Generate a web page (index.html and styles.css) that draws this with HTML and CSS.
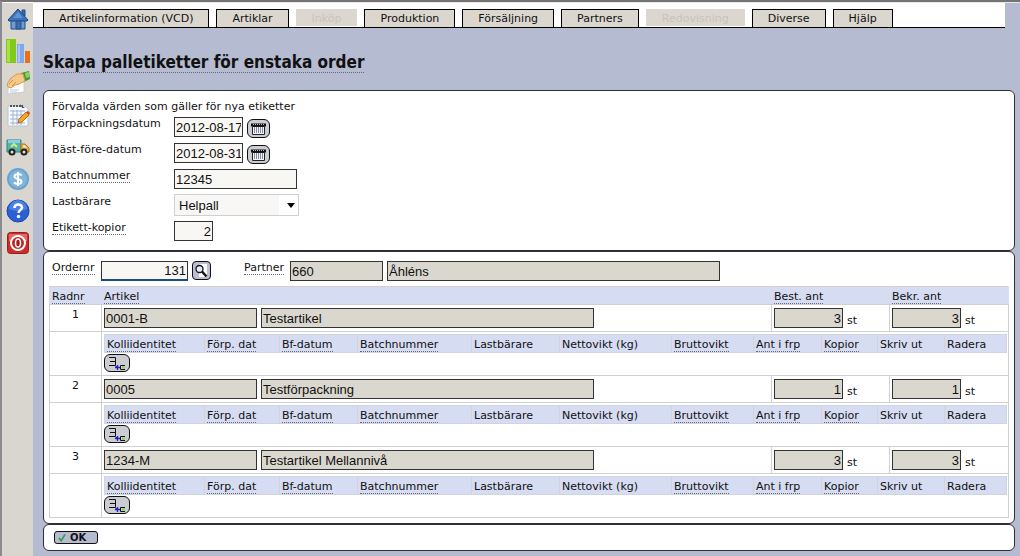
FILE: index.html
```html
<!DOCTYPE html>
<html lang="sv">
<head>
<meta charset="utf-8">
<title>Skapa palletiketter för enstaka order</title>
<link rel="stylesheet" href="styles.css">
</head>
<body>
<svg class="defs" aria-hidden="true">
  <symbol id="cal" viewBox="0 0 17 13">
    <path d="M2.500 4.500h12v8h-12z" fill="#f4f5f8" stroke="#222"/>
    <path d="M1 1.500h15v3H1z" fill="#111"/>
    <path d="M3 2.500h11" stroke="#bbb" stroke-dasharray="1 1"/>
    <path d="M4.500 5v6M6.500 5v6M8.500 5v6M10.500 5v6M12.500 5v6" stroke="#8489a0"/>
  </symbol>
  <symbol id="add" viewBox="0 0 24 16">
    <path d="M4 2.500h6.500v8H4M5 6.500h5" fill="none" stroke="#111"/>
    <path d="M10 12.500h5M12.500 10v5M10.500 12.500l2-2" fill="none" stroke="#22b" stroke-width="1.300"/>
    <path d="M20 10.500h-4.500v4H20" fill="none" stroke="#111"/>
    <path d="M17 11.500h3v2h-3z" fill="#7d5"/>
  </symbol>
</svg>
<div class="app">
  <nav class="tools" aria-label="Genvägar">
    <a href="#" aria-label="Hem"><svg viewBox="0 0 24 24"><path d="M5 13v9h14v-9l-7-8z" fill="#6f9cd2" stroke="#234d86"/><path d="M16 3h3v6h-3z" fill="#3b6cab" stroke="#234d86"/><path d="M2 13L12 2l10 11-1 1H3z" fill="#3b74bb" stroke="#1d457d"/><path d="M7 11l5-6 5 6z" fill="#5d94d4"/><path d="M10 14h5v8h-5z" fill="#3d6cab" stroke="#27528d"/></svg></a>
    <a href="#" aria-label="Statistik"><svg viewBox="0 0 24 24"><path d="M0 0h10v24H0z" fill="#83c91c"/><path d="M1 1h3v22H1z" fill="#a9e044"/><path d="M11 5h7v19h-7z" fill="#7fa8ee"/><path d="M12 6h2v17h-2z" fill="#a7c5f8"/><path d="M19 12h5v12h-5z" fill="#e5731b"/></svg></a>
    <a href="#" aria-label="Inköp"><svg viewBox="0 0 24 24"><path d="M2 10l16-1v12L2 23z" fill="#fff" stroke="#c9ccd0"/><path d="M4 19h9M4 21h7" stroke="#bcd"/><path d="M15 2l8-2 1 8-6 3z" fill="#3f9b34"/><path d="M19 2l4-1v5l-3 1z" fill="#8fd167"/><path d="M17 3l2 7-6 3-4 1-4 3-3-1-1-3 4-6 6-4z" fill="#f4c988" stroke="#d59a50"/><path d="M3 13l4-4M6 15l4-4" stroke="#cf9650"/></svg></a>
    <a href="#" aria-label="Order"><svg viewBox="0 0 24 24"><path d="M2 3h17l3 3v17H2z" fill="#f7faff" stroke="#b8c5d8"/><path d="M4 8h15M4 12h15M4 16h15M4 20h15M7 7v15M11 7v15M15 7v15" stroke="#9cb4d6"/><path d="M4 3h13" stroke="#556" stroke-width="2" stroke-dasharray="2 1"/><path d="M14 1l5 4h-3z" fill="#456"/><path d="M12 20l1-4 7-7 3 3-7 7z" fill="#f5a623" stroke="#b96b13"/><path d="M20 9l3 3 1-2-2-2z" fill="#d34430"/></svg></a>
    <a href="#" aria-label="Leverans"><svg viewBox="0 0 24 24"><path d="M1 5h14v12H1z" fill="#5bb4a6" stroke="#2e837a"/><path d="M2 5h12v3H2z" fill="#86d0ec"/><path d="M5 12l3-3 3 3" fill="none" stroke="#bff08c" stroke-width="2"/><path d="M15 9h4l4 4v4h-8z" fill="#f3a720" stroke="#c0760e"/><path d="M17 10h2l2 3h-4z" fill="#c3e4f7"/><circle cx="6" cy="17" r="2.500" fill="#ddd" stroke="#222" stroke-width="2"/><circle cx="18" cy="17" r="2.500" fill="#ddd" stroke="#222" stroke-width="2"/></svg></a>
    <a href="#" aria-label="Ekonomi"><svg viewBox="0 0 24 24"><circle cx="12" cy="12" r="11" fill="#6ba3cf"/><circle cx="12" cy="12" r="9" fill="#80b5dc"/><path d="M15.500 8.500C14 6.500 8.500 6.500 8.500 9.500c0 3 7 2 7 5 0 3-5.500 3-7.500 1M12 5v14" fill="none" stroke="#fff" stroke-width="2"/></svg></a>
    <a href="#" aria-label="Hjälp"><svg viewBox="0 0 24 24"><circle cx="12" cy="12" r="11" fill="#2b5fd4" stroke="#1c46a8"/><path d="M3 10a9 9 0 0 1 18 0q-9 4-18 0" fill="#4d80e6"/><path d="M8.500 9c0-5 7.500-4.500 7.500-.5 0 2.500-3.500 2.500-3.500 5.500" fill="none" stroke="#fff" stroke-width="2.500"/><circle cx="12.500" cy="17.500" r="1.700" fill="#fff"/></svg></a>
    <a href="#" aria-label="Logga ut"><svg viewBox="0 0 24 24"><rect x="1.500" y="1.500" width="21" height="21" rx="3" fill="#cf2a27" stroke="#96201d"/><path d="M3 3h18v7H3z" fill="#e46561"/><circle cx="12" cy="12" r="7" fill="#bd2522" stroke="#fff" stroke-width="2"/><ellipse cx="12" cy="12" rx="2.500" ry="4" fill="#a51c1a" stroke="#fff" stroke-width="1.500"/></svg></a>
  </nav>
  <div class="main">
    <nav class="tabs" aria-label="Huvudmeny">
      <button class="tab" type="button">Artikelinformation (VCD)</button>
      <button class="tab" type="button">Artiklar</button>
      <button class="tab" type="button" disabled>Inköp</button>
      <button class="tab" type="button">Produktion</button>
      <button class="tab" type="button">Försäljning</button>
      <button class="tab" type="button">Partners</button>
      <button class="tab" type="button" disabled>Redovisning</button>
      <button class="tab" type="button">Diverse</button>
      <button class="tab" type="button">Hjälp</button>
    </nav>
    <form class="content">
      <h1><span class="hint">Skapa palletiketter för enstaka order</span></h1>

      <section class="panel defaults">
        <p>Förvalda värden som gäller för nya etiketter</p>
        <div class="fields">
          <label for="packdate">Förpackningsdatum</label>
          <div class="control"><input class="field date" id="packdate" value="2012-08-17"><button class="icon-btn cal" type="button" aria-label="Välj förpackningsdatum"><svg><use href="#cal"/></svg></button></div>
          <label for="bestdate">Bäst-före-datum</label>
          <div class="control"><input class="field date" id="bestdate" value="2012-08-31"><button class="icon-btn cal" type="button" aria-label="Välj bäst-före-datum"><svg><use href="#cal"/></svg></button></div>
          <label for="batch"><span class="hint">Batchnummer</span></label>
          <div class="control"><input class="field batch" id="batch" value="12345"></div>
          <label for="carrier">Lastbärare</label>
          <div class="control"><span class="select"><select id="carrier"><option>Helpall</option></select></span></div>
          <label for="copies"><span class="hint">Etikett-kopior</span></label>
          <div class="control"><input class="field copies num" id="copies" value="2"></div>
        </div>
      </section>

      <section class="panel order">
        <div class="order-row">
          <label class="order-label" for="orderno"><span class="hint">Ordernr</span></label>
          <input class="field orderno num" id="orderno" value="131">
          <button class="icon-btn find" type="button" aria-label="Sök order"><svg viewBox="0 0 17 16"><path d="M6 1h8v13H6z" fill="#fff"/><circle cx="6.500" cy="6" r="3.500" fill="#e8eef8" stroke="#111" stroke-width="1.300"/><path d="M9 8.500l4.500 5" stroke="#111" stroke-width="2.500"/></svg></button>
          <label class="partner-label" for="partner"><span class="hint">Partner</span></label>
          <input class="field partner ro" id="partner" value="660" readonly>
          <input class="field wide ro" aria-label="Partnernamn" value="Åhléns" readonly>
        </div>
        <table class="rows">
          <colgroup><col class="c-no"><col><col class="c-best"><col class="c-bekr"></colgroup>
          <thead><tr><th><span class="hint">Radnr</span></th><th><span class="hint">Artikel</span></th><th><span class="hint">Best. ant</span></th><th><span class="hint">Bekr. ant</span></th></tr></thead>
          <tbody>
            <tr>
              <td class="no">1</td>
              <td><div class="cell"><input class="field art ro" aria-label="Artikel" value="0001-B" readonly><input class="field wide ro" aria-label="Benämning" value="Testartikel" readonly></div></td>
              <td><div class="cell"><input class="field qty num ro" aria-label="Beställt antal" value="3" readonly><span class="unit">st</span></div></td>
              <td><div class="cell"><input class="field qty num ro" aria-label="Bekräftat antal" value="3" readonly><span class="unit">st</span></div></td>
            </tr>
            <tr>
              <td></td>
              <td class="nest" colspan="3">
                <table class="labels">
                  <colgroup><col class="w100"><col class="w75"><col class="w78"><col class="w114"><col class="w88"><col class="w112"><col class="w82"><col class="w68"><col class="w56"><col class="w67"><col class="w62"></colgroup>
                  <tr><th><span class="hint">Kolliidentitet</span></th><th><span class="hint">Förp. dat</span></th><th><span class="hint">Bf-datum</span></th><th><span class="hint">Batchnummer</span></th><th>Lastbärare</th><th>Nettovikt (kg)</th><th><span class="hint">Bruttovikt</span></th><th><span class="hint">Ant i frp</span></th><th><span class="hint">Kopior</span></th><th>Skriv ut</th><th>Radera</th></tr>
                </table>
                <button class="icon-btn add" type="button" aria-label="Lägg till"><svg><use href="#add"/></svg></button>
              </td>
            </tr>
            <tr>
              <td class="no">2</td>
              <td><div class="cell"><input class="field art ro" aria-label="Artikel" value="0005" readonly><input class="field wide ro" aria-label="Benämning" value="Testförpackning" readonly></div></td>
              <td><div class="cell"><input class="field qty num ro" aria-label="Beställt antal" value="1" readonly><span class="unit">st</span></div></td>
              <td><div class="cell"><input class="field qty num ro" aria-label="Bekräftat antal" value="1" readonly><span class="unit">st</span></div></td>
            </tr>
            <tr>
              <td></td>
              <td class="nest" colspan="3">
                <table class="labels">
                  <colgroup><col class="w100"><col class="w75"><col class="w78"><col class="w114"><col class="w88"><col class="w112"><col class="w82"><col class="w68"><col class="w56"><col class="w67"><col class="w62"></colgroup>
                  <tr><th><span class="hint">Kolliidentitet</span></th><th><span class="hint">Förp. dat</span></th><th><span class="hint">Bf-datum</span></th><th><span class="hint">Batchnummer</span></th><th>Lastbärare</th><th>Nettovikt (kg)</th><th><span class="hint">Bruttovikt</span></th><th><span class="hint">Ant i frp</span></th><th><span class="hint">Kopior</span></th><th>Skriv ut</th><th>Radera</th></tr>
                </table>
                <button class="icon-btn add" type="button" aria-label="Lägg till"><svg><use href="#add"/></svg></button>
              </td>
            </tr>
            <tr>
              <td class="no">3</td>
              <td><div class="cell"><input class="field art ro" aria-label="Artikel" value="1234-M" readonly><input class="field wide ro" aria-label="Benämning" value="Testartikel Mellannivå" readonly></div></td>
              <td><div class="cell"><input class="field qty num ro" aria-label="Beställt antal" value="3" readonly><span class="unit">st</span></div></td>
              <td><div class="cell"><input class="field qty num ro" aria-label="Bekräftat antal" value="3" readonly><span class="unit">st</span></div></td>
            </tr>
            <tr>
              <td></td>
              <td class="nest" colspan="3">
                <table class="labels">
                  <colgroup><col class="w100"><col class="w75"><col class="w78"><col class="w114"><col class="w88"><col class="w112"><col class="w82"><col class="w68"><col class="w56"><col class="w67"><col class="w62"></colgroup>
                  <tr><th><span class="hint">Kolliidentitet</span></th><th><span class="hint">Förp. dat</span></th><th><span class="hint">Bf-datum</span></th><th><span class="hint">Batchnummer</span></th><th>Lastbärare</th><th>Nettovikt (kg)</th><th><span class="hint">Bruttovikt</span></th><th><span class="hint">Ant i frp</span></th><th><span class="hint">Kopior</span></th><th>Skriv ut</th><th>Radera</th></tr>
                </table>
                <button class="icon-btn add" type="button" aria-label="Lägg till"><svg><use href="#add"/></svg></button>
              </td>
            </tr>
          </tbody>
        </table>
      </section>

      <section class="panel actions">
        <button class="ok" type="button"><svg viewBox="0 0 9 9"><path d="M1 5l2.500 3L8 1" fill="none" stroke="#3a9a55" stroke-width="2"/></svg>OK</button>
      </section>
    </form>
  </div>
</div>
</body>
</html>
```
FILE: styles.css
```css
* { box-sizing: border-box; }
body {
  margin: 0;
  background: #b5bbd1;
  color: #111;
  font: 11px/13px Verdana, "DejaVu Sans", sans-serif;
}
button, input, select { font: inherit; color: inherit; margin: 0; }
h1, p { margin: 0; font-weight: normal; }
.defs { display: none; }
.app {
  display: flex;
  min-height: 100vh;
  border-top: 2px solid #757373;
  border-left: 2px solid #8b8b8f;
}
.tools {
  flex: none;
  display: grid;
  grid-auto-rows: 32px;
  align-content: start;
  justify-items: center;
  width: 31px;
  border-top: 1px solid #fff;
  background: #d9d6cf;
}
.tools a { display: flex; align-items: center; }
.tools svg { width: 24px; height: 24px; }
.main { flex: 1; min-width: 0; border-top: 1px solid #e8e8e8; }
.tabs {
  display: flex;
  gap: 7px;
  margin-right: 15px;
  padding: 6px 0 0 10px;
  border-bottom: 1px solid #000;
  background: #fff;
}
.tab {
  height: 18px;
  padding: 0 15px;
  border: 1px solid #000;
  border-bottom: 0;
  background: #dbd7cf;
  line-height: 17px;
  white-space: nowrap;
}
.tab:disabled { height: 17px; border-color: #dbd8d2; color: #c6c3be; }
.content { padding: 0 5px 5px 10px; }
h1 {
  padding: 24px 0 17px;
  font: bold 17px/21px Tahoma, "DejaVu Sans Condensed", sans-serif;
}
.hint { border-bottom: 1px dotted #667; }
.panel { border: 1px solid #2e2f3a; border-radius: 6px; background: #fff; }
.defaults { padding: 9px 8px; }
.defaults p { margin-bottom: 4px; }
.fields {
  display: grid;
  grid-template-columns: 122px 1fr;
  grid-auto-rows: 20px;
  row-gap: 6px;
}
.control { display: flex; align-items: center; gap: 4px; }
.field {
  height: 20px;
  min-width: 0;
  padding: 0 1px;
  border: 1px solid #333;
  border-radius: 0;
  background: #f8f7f4;
  font: 13px "Liberation Sans", Arial, sans-serif;
}
.ro { background: #dad7cf; }
.num { text-align: right; }
.date { width: 69px; }
.batch { width: 123px; }
.copies { width: 39px; }
.select { position: relative; width: 125px; }
.select::after {
  content: "";
  position: absolute;
  top: 9px;
  right: 4px;
  border: 4px solid transparent;
  border-top: 5px solid #000;
  border-bottom: 0;
  pointer-events: none;
}
.select select {
  display: block;
  appearance: none;
  width: 100%;
  height: 22px;
  padding: 0 20px 0 4px;
  border: 1px solid #d0d0d0;
  border-radius: 0;
  background: linear-gradient(90deg, #f8f7f6 104px, #fff 104px);
  font: 13px "Liberation Sans", Arial, sans-serif;
}
.icon-btn {
  flex: none;
  display: flex;
  align-items: center;
  justify-content: center;
  padding: 0;
  border: 1px solid #111;
  border-radius: 6px;
  background: #cccdd2;
}
.cal { width: 23px; height: 19px; margin-top: 2px; }
.cal svg { width: 17px; height: 13px; }
.find { width: 19px; height: 19px; border-radius: 4px; background: #b9bed3; }
.find svg { width: 17px; height: 16px; }
.add { width: 26px; height: 18px; margin-top: 1px; }
.add svg { width: 24px; height: 16px; }
.order { padding: 9px 5px 5px; }
.order-row { display: flex; align-items: flex-start; gap: 4px; padding-left: 3px; margin-bottom: 5px; }
.order-label { width: 45px; white-space: nowrap; }
.orderno { width: 87px; border-bottom: 2px solid #1c4c86; }
.partner-label { width: 42px; margin-left: 29px; white-space: nowrap; }
.partner { width: 93px; }
.wide { width: 333px; }
table { width: 100%; table-layout: fixed; border-collapse: collapse; }
th, td { padding: 0 2px; border: 1px solid #d0d0d0; text-align: left; vertical-align: top; font-weight: normal; }
th { height: 18px; padding-top: 3px; background: #d6dcf1; white-space: nowrap; }
.rows > thead th { border-left-color: #d6dcf1; border-right-color: #d6dcf1; }
.c-no { width: 52px; }
.c-best { width: 118px; }
.c-bekr { width: 119px; }
.no { padding-top: 3px; text-align: center; }
.cell { display: flex; gap: 4px; padding: 3px 0; }
.art { width: 153px; }
.qty { width: 69px; }
.unit { padding-top: 6px; }
.nest { padding: 2px 2px 3px; }
.labels th { border-color: #d0d3e0; }
.w100 { width: 100px; }
.w75 { width: 75px; }
.w78 { width: 78px; }
.w114 { width: 114px; }
.w88 { width: 88px; }
.w112 { width: 112px; }
.w82 { width: 82px; }
.w68 { width: 68px; }
.w56 { width: 56px; }
.w67 { width: 67px; }
.w62 { width: 62px; }
.actions { padding: 6px 10px; }
.ok {
  display: flex;
  align-items: center;
  gap: 4px;
  width: 44px;
  height: 13px;
  padding: 0 3px;
  border: 1px solid #111;
  border-radius: 3px;
  background: #b5bbd1;
  font-size: 10px;
  font-weight: bold;
  line-height: 11px;
}
.ok svg { width: 8px; height: 9px; }
```
